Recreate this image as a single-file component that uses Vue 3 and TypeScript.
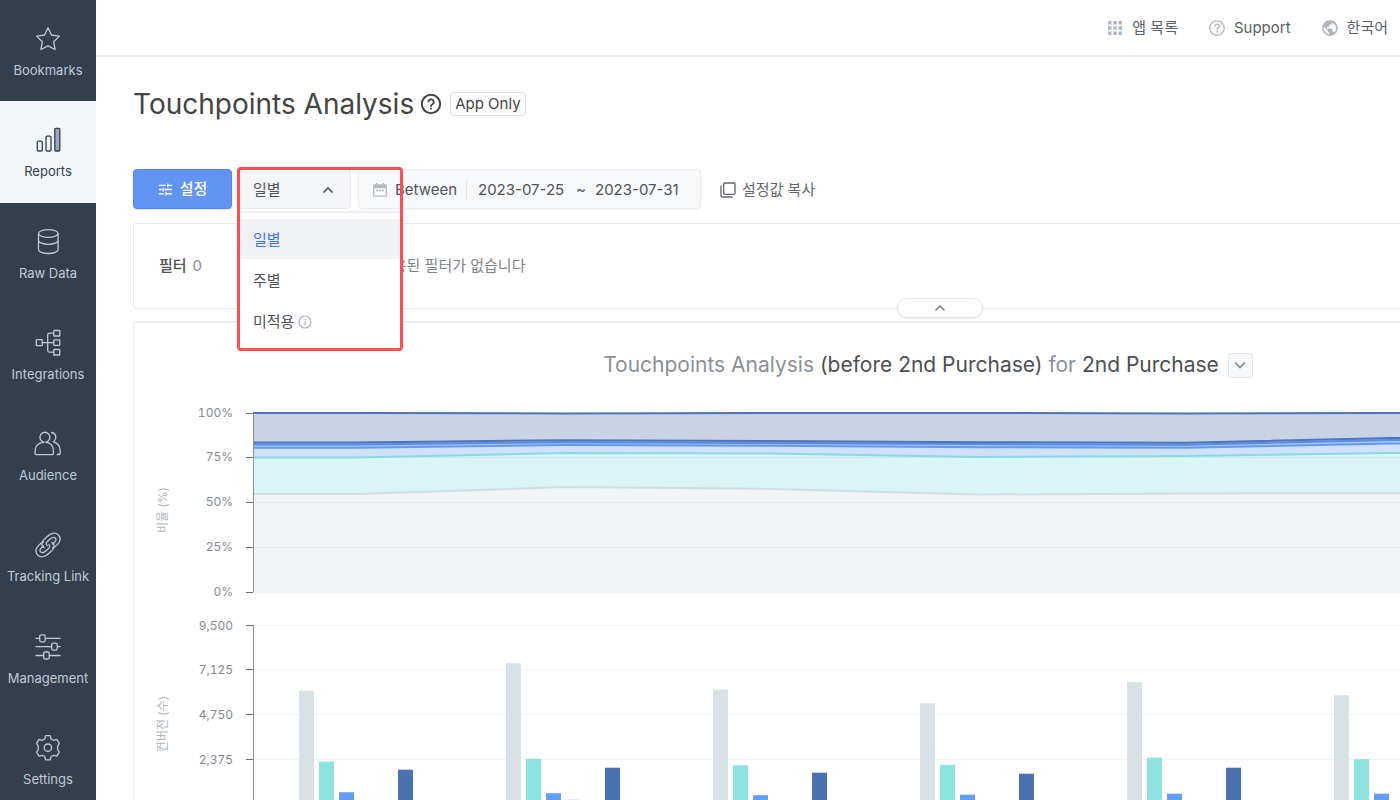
<script setup lang="ts">
import { ref } from 'vue'

interface NavItem { label: string; icon: string }
interface Series { name: string; color: string; values: number[] }
interface Band { color: string; fill: string; values: number[] }

const nav: NavItem[] = [
  { label: 'Bookmarks', icon: 'star' },
  { label: 'Reports', icon: 'bars' },
  { label: 'Raw Data', icon: 'database' },
  { label: 'Integrations', icon: 'tree' },
  { label: 'Audience', icon: 'people' },
  { label: 'Tracking Link', icon: 'link' },
  { label: 'Management', icon: 'sliders' },
  { label: 'Settings', icon: 'gear' },
]
const activeNav = ref('Reports')

const periods = [
  { label: '일별', info: false },
  { label: '주별', info: false },
  { label: '미적용', info: true },
]
const period = ref('일별')
const menuOpen = ref(true)
const condition = ref('Between')
const from = ref('2023-07-25')
const to = ref('2023-07-31')

function choose(label: string) {
  period.value = label
  menuOpen.value = false
}

// Plot geometry shared by both charts
const left = 119
const top = 13
const plotHeight = 179
const step = 207
const right = left + step * 7

const bands: Band[] = [
  { color: '#4a74b4', fill: '#c8d4e5', values: [100, 99.8, 100, 100, 99.8, 100, 100] },
  { color: '#4a76bd', fill: '#a9c6f8', values: [83.5, 84.8, 84.3, 83.7, 83.4, 86, 86] },
  { color: '#5b8de0', fill: '#a9c6f8', values: [82.4, 83.7, 83.2, 82.6, 82.3, 84.9, 84.9] },
  { color: '#649bf2', fill: '#cfe0fb', values: [80.6, 82.1, 81.7, 80.9, 80.6, 82.9, 83] },
  { color: '#8bd9e2', fill: '#daf5f5', values: [75.1, 77.6, 77.3, 75.5, 76, 77.7, 77.6] },
  { color: '#cfdfe3', fill: '#f3f4f6', values: [54.7, 58.6, 57.6, 54.4, 55.1, 55.2, 55] },
]
const shareTicks = ['100%', '75%', '50%', '25%', '0%']
const countTicks = ['9,500', '7,125', '4,750', '2,375', '0']

const series: Series[] = [
  { name: '1', color: '#d8e1e4', values: [6013, 7472, 6066, 5349, 6464, 5774, 5900] },
  { name: '2', color: '#8de3e0', values: [2245, 2404, 2059, 2086, 2457, 2378, 2300] },
  { name: '3', color: '#659df3', values: [626, 573, 467, 494, 547, 547, 520] },
  { name: '4', color: '#dfe5f0', values: [180, 255, 180, 170, 200, 190, 180] },
  { name: '5', color: '#83aaf0', values: [90, 95, 90, 80, 90, 90, 90] },
  { name: '6', color: '#4a72b0', values: [1820, 1926, 1661, 1608, 1926, 1850, 1800] },
]

const tickY = (i: number) => top + Math.floor((plotHeight / 4) * i)
const bandY = (v: number) => top + plotHeight * (1 - v / 100)

function linePoints(values: number[]): string {
  const inner = values.map((v, i) => `${left + step * (i + 0.5)},${bandY(v).toFixed(1)}`)
  const first = `${left},${bandY(values[0]).toFixed(1)}`
  const last = `${right},${bandY(values[values.length - 1]).toFixed(1)}`
  return [first, ...inner, last].join(' ')
}
const areaPoints = (values: number[]) =>
  `${linePoints(values)} ${right},${top + plotHeight} ${left},${top + plotHeight}`

const barHeight = (v: number) => (v / 9500) * plotHeight
const barX = (group: number, index: number) => left + step * group + 46 + Math.round(index * 19.8)
</script>

<template>
  <div class="app">
    <nav class="sidebar" aria-label="Main">
      <a
        v-for="item in nav"
        :key="item.label"
        href="#"
        class="nav-item"
        :class="{ active: item.label === activeNav }"
        @click.prevent="activeNav = item.label"
      >
        <svg class="nav-icon" viewBox="0 0 28 28" aria-hidden="true">
          <path v-if="item.icon === 'star'" d="M14 2.8l3.5 7.2 7.9 1.1-5.7 5.6 1.4 7.8-7.1-3.7-7.1 3.7 1.4-7.8-5.7-5.6 7.9-1.1z" />
          <g v-else-if="item.icon === 'bars'">
            <rect x="3.3" y="15.2" width="5" height="9.8" rx="1.3" />
            <rect x="12" y="10.2" width="5" height="14.8" rx="1.3" />
            <rect x="20.8" y="2.3" width="5" height="22.7" rx="1" class="solid" />
          </g>
          <g v-else-if="item.icon === 'database'">
            <ellipse cx="14.3" cy="5.500" rx="9.8" ry="3.9" />
            <path d="M4.5 5.500v16c0 2.300 4.400 4 9.800 4s9.800-1.700 9.800-4v-16M4.500 12.300c0 2.300 4.400 4 9.800 4s9.800-1.700 9.800-4" />
          </g>
          <g v-else-if="item.icon === 'tree'">
            <rect x="2.300" y="10.700" width="6" height="6" rx=".6" />
            <rect x="19.800" y="1.500" width="6" height="5.500" rx=".6" />
            <rect x="19.800" y="10.900" width="6" height="5.500" rx=".6" />
            <rect x="19.800" y="20.500" width="6" height="5.500" rx=".6" />
            <path d="M8.300 13.700h11.500M19.800 4.200h-4.300q-1.800 0-1.800 1.800v15.400q0 1.800 1.800 1.800h4.300" />
          </g>
          <g v-else-if="item.icon === 'people'">
            <path d="M10.100 12.200a5 5 0 1 1 1.600 0c4.700.8 7.700 3.700 7.700 8.600v2.800q0 1-1 1H2.100q-1 0-1-1v-2.800c0-4.900 3.300-7.800 9-8.600z" />
            <path d="M17 2.500c5 0 6.500 6.300 2.300 9.200 4.300 1.500 6.900 4.700 6.900 9.200v2.600q0 1-1 1h-2.400" />
          </g>
          <g v-else-if="item.icon === 'link'">
            <path d="M10.500 16.900c-3.200-1.400-3.500-5.200-.8-8l3.800-3.700c3.200-3 7.800-4.200 10.700-1.500 2.900 2.800 2.400 6.800-.8 9.900-1.800 1.800-3.500 3-5.400 3.700" />
            <path d="M13.700 14.600c-1.900-.7-1.900-2.500-.4-4l3-2.600c1.600-1.400 3.900-2.100 5.100-.9 1.200 1.200.6 2.900-1 4.300-.8.700-1.500 1.200-2.400 1.700" />
            <path d="M17.500 11.100c3.200 1.400 3.500 5.200.8 8l-3.800 3.700c-3.200 3-7.800 4.200-10.700 1.500-2.900-2.800-2.400-6.800.8-9.900 1.800-1.800 3.500-3 5.400-3.700" />
            <path d="M14.300 13.400c1.900.7 1.900 2.500.4 4l-3 2.600c-1.600 1.400-3.900 2.100-5.100.9-1.200-1.200-.6-2.900 1-4.300.8-.7 1.500-1.200 2.400-1.700" />
          </g>
          <g v-else-if="item.icon === 'sliders'">
            <path d="M1.500 5.300h4.200M11.200 5.300h15.300M1.500 13.700h16.200M23.200 13.700h3.300M1.500 22.500h8.200M15.200 22.500h11.300" />
            <rect x="5.700" y="1.800" width="5.500" height="7" rx="1.600" />
            <rect x="17.700" y="10.200" width="5.500" height="7" rx="1.600" />
            <rect x="9.700" y="19" width="5.500" height="7" rx="1.600" />
          </g>
          <g v-else>
            <path d="M11.600 1.700h4.600l.9 3.300 2.300 1.300 3.400-.9 2.500 4-1.700 2.900v3l1.700 2.800-2.500 4-3.400-.8-2.300 1.300-.9 3.200h-4.600l-.9-3.200-2.300-1.300-3.400.8-2.400-4 1.700-2.800v-3L2.600 9.400l2.400-4 3.400.9 2.300-1.300z" />
            <circle cx="13.900" cy="13.700" r="3.700" />
          </g>
        </svg>
        <span>{{ item.label }}</span>
      </a>
    </nav>

    <div class="page">
      <header class="topbar">
        <a href="#" class="top-link">
          <svg viewBox="0 0 18 18" class="top-icon" aria-hidden="true">
            <path fill="currentColor" d="M2 2h3.500v3.500H2zM7.300 2h3.500v3.500H7.300zM12.500 2H16v3.500h-3.500zM2 7.300h3.500v3.500H2zM7.300 7.300h3.500v3.500H7.300zM12.500 7.300H16v3.500h-3.500zM2 12.500h3.500V16H2zM7.300 12.500h3.500V16H7.300zM12.500 12.500H16V16h-3.500z" />
          </svg>
          앱 목록
        </a>
        <a href="#" class="top-link">
          <svg viewBox="0 0 24 24" class="top-icon" aria-hidden="true">
            <path fill="currentColor" d="M11 18h2v-2h-2v2zm1-16.500C6.200 1.500 1.500 6.200 1.500 12S6.200 22.500 12 22.500 22.500 17.800 22.500 12 17.800 1.500 12 1.500zm0 19.200c-4.800 0-8.700-3.900-8.700-8.700S7.200 3.300 12 3.300s8.700 3.900 8.700 8.700-3.900 8.700-8.700 8.700zM12 6c-2.200 0-4 1.800-4 4h2c0-1.100.9-2 2-2s2 .9 2 2c0 2-3 1.750-3 5h2c0-2.250 3-2.500 3-5 0-2.200-1.800-4-4-4z" />
          </svg>
          Support
        </a>
        <a href="#" class="top-link">
          <svg viewBox="0 0 24 24" class="top-icon" aria-hidden="true">
            <path fill="currentColor" d="M12 1.500C6.200 1.500 1.500 6.200 1.500 12S6.200 22.500 12 22.500 22.500 17.800 22.500 12 17.800 1.500 12 1.500zm-1 18.900c-4-.5-7.400-4-7.400-8.400 0-.6.100-1.200.2-1.800L9 15v1c0 1.100.9 2 2 2v2.400zm6.900-2.500c-.3-.8-1-1.400-1.900-1.400h-1v-3c0-.6-.4-1-1-1H8v-2h2c.6 0 1-.4 1-1v-2h2c1.100 0 2-.9 2-2v-.4c2.900 1.200 5 4.100 5 7.400 0 2.100-.8 4-2.100 5.400z" />
          </svg>
          한국어
        </a>
      </header>

      <main class="content">
        <div class="heading">
          <h1>Touchpoints Analysis</h1>
          <svg viewBox="0 0 24 24" class="help" aria-hidden="true">
            <circle cx="12" cy="12" r="10" fill="none" stroke="currentColor" stroke-width="2.200" />
            <path fill="currentColor" d="M11 18h2v-2h-2v2zM12 6c-2.200 0-4 1.800-4 4h2c0-1.100.9-2 2-2s2 .9 2 2c0 2-3 1.750-3 5h2c0-2.250 3-2.500 3-5 0-2.200-1.800-4-4-4z" />
          </svg>
          <span class="tag">App Only</span>
        </div>

        <div class="controls">
          <button type="button" class="primary">
            <svg viewBox="0 0 16 16" class="tune" aria-hidden="true">
              <path d="M1 3.500h7M11 3.500h4M10.500 1.500v4M1 8h3M7 8h8M5.500 6v4M1 12.500h5M9 12.500h6M8.500 10.500v4" />
            </svg>
            설정
          </button>

          <div class="period">
            <button
              type="button"
              class="trigger"
              aria-haspopup="listbox"
              :aria-expanded="menuOpen"
              @click="menuOpen = !menuOpen"
            >
              {{ period }}
              <svg viewBox="0 0 12 12" class="chevron" aria-hidden="true"><path d="M1.500 8.500L6 4l4.500 4.500" /></svg>
            </button>
            <div v-if="menuOpen" class="menu" role="listbox" aria-label="기간 단위">
              <button
                v-for="p in periods"
                :key="p.label"
                type="button"
                role="option"
                class="option"
                :class="{ selected: p.label === period }"
                :aria-selected="p.label === period"
                @click="choose(p.label)"
              >
                {{ p.label }}
                <svg v-if="p.info" viewBox="0 0 14 14" class="info" aria-hidden="true">
                  <circle cx="7" cy="7" r="6" />
                  <path d="M7 6.300v3.900M7 3.800v1.200" />
                </svg>
              </button>
            </div>
            <div v-if="menuOpen" class="highlight"></div>
          </div>

          <div class="range">
            <svg viewBox="0 0 14 16" class="calendar" aria-hidden="true">
              <path d="M1.700 2.800h10.600q1 0 1 1v9.400q0 1-1 1H1.700q-1 0-1-1V3.800q0-1 1-1z" fill="#fff" stroke="#b3b9c0" stroke-width="1.300" />
              <path d="M.7 3h12.600v3.200H.7zM2.700 1h1.800v2H2.700zM9.500 1h1.800v2H9.500z" fill="#b3b9c0" />
              <path d="M3 8.500h2M6 8.500h2M9 8.500h2" stroke="#b3b9c0" stroke-width="1.300" />
            </svg>
            <select v-model="condition" class="condition" aria-label="조건">
              <option>Between</option>
            </select>
            <input v-model="from" type="text" class="date" aria-label="시작일" />
            <span class="tilde">~</span>
            <input v-model="to" type="text" class="date" aria-label="종료일" />
          </div>

          <button type="button" class="copy">
            <svg viewBox="0 0 16 16" class="copy-icon" aria-hidden="true">
              <rect x="3.700" y="1" width="11.300" height="11.300" rx="1" />
              <path d="M1 3.500v10.300q0 1.200 1.200 1.200h10.300" />
            </svg>
            설정값 복사
          </button>
        </div>

        <section class="panel filter">
          <h2 class="filter-title">필터 <span>0</span></h2>
          <p class="filter-empty">적용된 필터가 없습니다</p>
          <button type="button" class="collapse" aria-label="접기">
            <svg viewBox="0 0 12 12" class="chevron" aria-hidden="true"><path d="M1.500 8.500L6 4l4.500 4.500" /></svg>
          </button>
        </section>

        <section class="panel report">
          <div class="report-head">
            <h2>Touchpoints Analysis <b>(before 2nd Purchase)</b> for <b>2nd Purchase</b></h2>
            <button type="button" class="expand" aria-label="보고서 선택">
              <svg viewBox="0 0 12 12" class="chevron" aria-hidden="true"><path d="M1 3.500l5 5 5-5" /></svg>
            </button>
          </div>

          <svg class="chart" role="img" aria-label="비율 (%)">
            <polygon v-for="(b, i) in bands" :key="'a' + i" :points="areaPoints(b.values)" :fill="b.fill" />
            <line v-for="(t, i) in shareTicks" :key="'g' + t" :x1="left" :x2="right" :y1="tickY(i) + 0.5" :y2="tickY(i) + 0.5" class="grid" />
            <polyline v-for="(b, i) in bands.slice().reverse()" :key="'l' + i" :points="linePoints(b.values)" :stroke="b.color" class="line" />
            <path :d="`M${left + 0.5} ${top}v${plotHeight}`" class="axis" />
            <g v-for="(t, i) in shareTicks" :key="t">
              <path :d="`M${left - 7} ${tickY(i) + 0.5}h7`" class="tick" />
              <text :x="left - 20" :y="tickY(i) + 4" class="tick-label">{{ t }}</text>
            </g>
            <text class="axis-title" transform="translate(33 110) rotate(-90)">비율 (%)</text>
          </svg>

          <svg class="chart" role="img" aria-label="컨버전 (수)">
            <line v-for="(t, i) in countTicks" :key="'g' + t" :x1="left" :x2="right" :y1="tickY(i) + 0.5" :y2="tickY(i) + 0.5" class="grid" />
            <g v-for="(s, n) in series" :key="s.name" :fill="s.color">
              <rect
                v-for="(v, i) in s.values"
                :key="i"
                :x="barX(i, n)"
                :y="top + plotHeight - barHeight(v)"
                width="15"
                :height="barHeight(v)"
              />
            </g>
            <path :d="`M${left + 0.5} ${top}v${plotHeight}`" class="axis" />
            <g v-for="(t, i) in countTicks" :key="t">
              <path :d="`M${left - 7} ${tickY(i) + 0.5}h7`" class="tick" />
              <text :x="left - 20" :y="tickY(i) + 5" class="tick-label">{{ t }}</text>
            </g>
            <text class="axis-title" transform="translate(33 112) rotate(-90)">컨버전 (수)</text>
          </svg>
        </section>
      </main>
    </div>
  </div>
</template>

<style>
body {
  margin: 0;
  overflow: hidden;
}
</style>

<style scoped>
.app,
.app * {
  box-sizing: border-box;
}
.app {
  display: flex;
  height: 100vh;
  overflow: hidden;
  background: #fff;
  color: #505357;
  font-family: Inter, 'Noto Sans CJK KR', sans-serif;
  font-size: 15px;
  line-height: 20px;
}
button,
input,
select {
  font: inherit;
  color: inherit;
  margin: 0;
}
button {
  cursor: pointer;
}
h1,
h2,
p {
  margin: 0;
  font-weight: 400;
}

.sidebar {
  display: flex;
  flex: none;
  flex-direction: column;
  width: 96px;
  min-height: 810px;
  background: #333f4d;
}
.nav-item {
  display: flex;
  flex: 1;
  flex-direction: column;
  align-items: center;
  gap: 7px;
  padding-top: 25px;
  color: #c0cad6;
  font-size: 13px;
  text-decoration: none;
  white-space: nowrap;
}
.nav-item.active {
  background: #f2f6f9;
  color: #333f4d;
}
.nav-icon {
  width: 28px;
  height: 28px;
  fill: none;
  stroke: currentColor;
  stroke-width: 1.3;
  stroke-linejoin: round;
}
.nav-icon .solid {
  fill: #97a9c4;
}

.page {
  flex: 1;
  min-width: 0;
}
.topbar {
  display: flex;
  justify-content: flex-end;
  align-items: center;
  gap: 30px;
  height: 57px;
  padding-right: 12px;
  border-bottom: 2px solid #ebeff3;
}
.top-link {
  display: flex;
  align-items: center;
  gap: 8px;
  color: #5c6066;
  text-decoration: none;
}
.top-icon {
  width: 18px;
  height: 18px;
  color: #b1b7be;
}

.content {
  min-width: 1688px;
  padding: 27px 37px 0;
}
.heading {
  display: flex;
  align-items: center;
  height: 40px;
}
.heading h1 {
  color: #444;
  font-size: 28px;
  line-height: 40px;
}
.help {
  width: 22px;
  height: 22px;
  margin: 0 8px 0 6px;
  color: #444;
}
.tag {
  padding: 0 4px;
  border: 1px solid #dfe2ea;
  border-radius: 4px;
  color: #444;
  line-height: 22px;
}

.controls {
  display: flex;
  gap: 7px;
  height: 40px;
  margin-top: 45px;
}
.primary {
  display: flex;
  align-items: center;
  justify-content: center;
  gap: 7px;
  width: 99px;
  border: 1px solid #5689ee;
  border-radius: 4px;
  background: #6294f6;
  box-shadow: 0 1px 2px rgba(60, 80, 120, 0.2);
  color: #fff;
  font-weight: 500;
}
.tune {
  width: 15px;
  height: 15px;
  fill: none;
  stroke: currentColor;
  stroke-width: 1.4;
}
.period {
  position: relative;
  width: 112px;
}
.trigger {
  display: flex;
  align-items: center;
  justify-content: space-between;
  width: 100%;
  height: 40px;
  padding: 2px 16px 0 13px;
  border: 1px solid #e9ebed;
  border-radius: 4px;
  background: #f4f5f7;
}
.chevron {
  width: 12px;
  height: 12px;
  fill: none;
  stroke: currentColor;
  stroke-width: 1.6;
}
.menu {
  position: absolute;
  z-index: 2;
  top: 42px;
  left: 0;
  display: flex;
  flex-direction: column;
  gap: 1px;
  width: 162px;
  padding: 6px 0 8px;
  border: 2px solid #ebeef2;
  border-width: 2px 1px 1px;
  border-radius: 3px;
  background: #fff;
}
.option {
  display: flex;
  align-items: center;
  gap: 4px;
  height: 40px;
  padding: 2px 13px 0;
  border: 0;
  background: none;
  text-align: left;
}
.option.selected {
  background: #eff1f5;
  color: #3b71fb;
}
.info {
  width: 14px;
  height: 14px;
  fill: none;
  stroke: #a9adb2;
  stroke-width: 1.1;
}
.highlight {
  position: absolute;
  z-index: 3;
  top: -2px;
  left: -2px;
  width: 166px;
  height: 184px;
  border: 3px solid #fa5052;
  border-radius: 4px;
  pointer-events: none;
}
.range {
  display: flex;
  align-items: center;
  width: 343px;
  padding: 1px 14px 0;
  border: 1px solid #e9ebef;
  border-radius: 4px;
  background: #f8f9fb;
  box-shadow: 0 1px 1px rgba(60, 80, 120, 0.06);
}
.calendar {
  flex: none;
  width: 14px;
  height: 16px;
  margin-right: 8px;
}
.condition {
  appearance: none;
  flex: none;
  width: 72px;
  padding: 0;
  border: 0;
  border-right: 1px solid #e3e6ea;
  background: none;
}
.date {
  flex: none;
  width: 93px;
  padding: 0;
  border: 0;
  background: none;
}
.condition + .date {
  margin-left: 11px;
}
.tilde {
  flex: none;
  width: 24px;
  padding-left: 5px;
}
.copy {
  display: flex;
  align-items: center;
  gap: 6px;
  margin-left: 12px;
  padding: 1px 0 0;
  border: 0;
  background: none;
  color: #62666b;
}
.copy-icon {
  width: 16px;
  height: 16px;
  fill: none;
  stroke: currentColor;
  stroke-width: 1.3;
}

.panel {
  position: relative;
  border: 1px solid #e6e8ef;
  border-radius: 3px;
}
.filter {
  display: flex;
  align-items: center;
  height: 86px;
  margin-top: 14px;
  padding-left: 25px;
}
.filter-title {
  width: 220px;
  font-size: 15px;
  font-weight: 500;
}
.filter-title span {
  margin-left: 2px;
  color: #8b9096;
  font-weight: 400;
}
.filter-empty {
  color: #808489;
}
.collapse {
  position: absolute;
  bottom: -10px;
  left: 50%;
  display: flex;
  align-items: center;
  justify-content: center;
  width: 86px;
  height: 20px;
  margin-left: -43px;
  padding: 0;
  border: 1px solid #e3e5ec;
  border-radius: 10px;
  background: #fff;
  box-shadow: 0 1px 2px rgba(60, 80, 120, 0.12);
  color: #85898e;
}
.report {
  margin-top: 12px;
  border-top-width: 2px;
  border-color: #eeeff5;
}
.report-head {
  display: flex;
  align-items: center;
  justify-content: center;
  gap: 9px;
  margin: 28px 24px 21px 0;
}
.report-head h2 {
  color: #8a9095;
  font-size: 21px;
  line-height: 28px;
}
.report-head b {
  color: #4c4f52;
  font-weight: 400;
}
.expand {
  display: flex;
  align-items: center;
  justify-content: center;
  width: 25px;
  height: 25px;
  padding: 0;
  border: 1px solid #e3e5e8;
  border-radius: 3px;
  background: #f7f8fa;
  color: #85898e;
}
.chart {
  display: block;
  width: 100%;
  height: 212px;
}
.grid {
  stroke: #000;
  stroke-opacity: 0.05;
}
.line {
  fill: none;
  stroke-width: 2;
}
.axis {
  fill: none;
  stroke: #8f9295;
}
.tick {
  fill: none;
  stroke: #6d7073;
}
.tick-label {
  fill: #84898e;
  font-size: 12px;
  font-variant-numeric: tabular-nums;
  text-anchor: end;
}
.axis-title {
  fill: #b0b5ba;
  font-size: 12px;
  text-anchor: middle;
}
</style>
